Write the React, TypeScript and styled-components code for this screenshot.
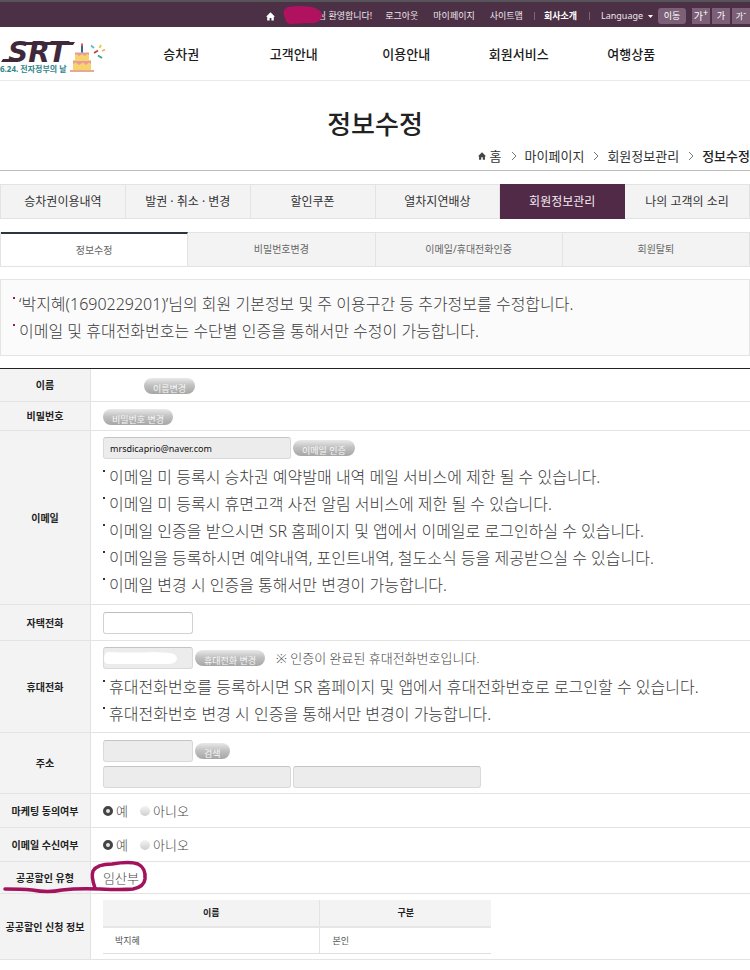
import React from "react";
import styled, { createGlobalStyle, css } from "styled-components";

const GlobalStyle = createGlobalStyle`
  *, *::before, *::after { box-sizing: border-box; }
  body {
    margin: 0;
    background: #fff;
    color: #444;
    font-family: "Noto Sans", "Noto Sans CJK KR", sans-serif;
    font-size: 13px;
    overflow-x: hidden;
  }
  h1, ul, ol, p { margin: 0; padding: 0; }
  ul, ol { list-style: none; }
  a { color: inherit; text-decoration: none; }
  button, input, select { font-family: inherit; margin: 0; }
  button { cursor: pointer; }
`;

/* ---------- top bar ---------- */

const TopBar = styled.div`
  display: flex;
  align-items: center;
  justify-content: flex-end;
  height: 27px;
  padding-top: 3px;
  border-top: 2px solid #58555a;
  background: #4b3046;
  color: #eee6ec;
  font-size: 9px;
  line-height: 16px;
  white-space: nowrap;
`;

const HomeLink = styled.a`
  display: flex;
  margin-right: 9px;
`;

const Welcome = styled.span`
  position: relative;
  padding-left: 34px;
  margin-right: 13px;
`;

const NameCover = styled.svg`
  position: absolute;
  left: -2px;
  top: -3px;
`;

const TopLink = styled.a<{ $strong?: boolean }>`
  margin-right: ${(p) => (p.$strong ? 12 : 15)}px;
  font-weight: ${(p) => (p.$strong ? 700 : 400)};
  color: ${(p) => (p.$strong ? "#fff" : "inherit")};

  &:nth-of-type(4) { margin-right: 11px; }
`;

const Bar = styled.span`
  width: 1px;
  height: 8px;
  margin-right: 9px;
  background: #7d6678;
`;

const LanguageField = styled.label`
  display: flex;
  align-items: center;
  gap: 4px;
  margin: 0 5px 0 2px;
`;

const LanguageSelect = styled.select`
  appearance: none;
  padding: 0;
  border: 0;
  background: transparent;
  color: inherit;
  font-size: 9px;
  line-height: 16px;
`;

const GoButton = styled.button`
  width: 28px;
  height: 16px;
  margin-right: 6px;
  padding: 0;
  border: 0;
  border-radius: 3px;
  background: #7b6077;
  color: #fff;
  font-size: 9px;
  line-height: 16px;
`;

const SizeButtons = styled.div`
  display: flex;
  gap: 2px;
`;

const SizeButton = styled.button<{ $size: number }>`
  display: flex;
  align-items: center;
  justify-content: center;
  width: 18px;
  height: 16px;
  padding: 0;
  border: 0;
  background: #7b6077;
  color: #fff;
  font-size: ${(p) => p.$size}px;
  line-height: 14px;

  sup { font-size: 9px; line-height: 9px; align-self: flex-start; }
`;

/* ---------- header ---------- */

const Header = styled.header`
  display: grid;
  grid-template-columns: 10fr 45fr 5fr;
  height: 54px;
  border-bottom: 1px solid #e9e9e9;
`;

const LogoLink = styled.a`
  display: block;
  padding-top: 13px;

  svg { display: block; overflow: visible; }
`;

const Nav = styled.nav`
  display: grid;
  grid-template-columns: repeat(5, 1fr);
  align-items: center;
  text-align: center;
  color: #1b1b1b;
  font-size: 13px;
  font-weight: 500;
`;

/* ---------- title ---------- */

const TitleArea = styled.section`
  border-bottom: 1px solid #bdbdbd;
  padding-top: 23px;
`;

const Title = styled.h1`
  text-align: center;
  color: #222;
  font-size: 26px;
  font-weight: 500;
  line-height: 40px;
`;

const Crumbs = styled.ol`
  display: flex;
  align-items: center;
  justify-content: flex-end;
  gap: 9px;
  height: 26px;
  padding-bottom: 2px;
  color: #333;
  font-size: 13px;
  line-height: 20px;
  white-space: nowrap;

  li { display: flex; align-items: center; gap: 8px; }
  li:first-child { gap: 4px; }
  li:last-child { font-weight: 500; color: #222; }
`;

/* ---------- tabs ---------- */

const MainTabs = styled.nav`
  display: grid;
  grid-template-columns: repeat(6, 1fr);
  margin-top: 13px;
  border-left: 1px solid #e3e3e3;
`;

const MainTab = styled.a<{ $active?: boolean }>`
  height: 35px;
  border: 1px solid #e3e3e3;
  border-left: 0;
  background: #f3f3f3;
  color: #333;
  font-size: 12px;
  line-height: 33px;
  text-align: center;
  white-space: nowrap;

  ${(p) => p.$active && css`
    border-color: #502a47;
    background: #502a47;
    color: #f4ecf2;
  `}
`;

const SubTabs = styled(MainTabs)`
  grid-template-columns: repeat(4, 1fr);
`;

const SubTab = styled.a<{ $active?: boolean }>`
  height: 35px;
  border: 1px solid #e3e3e3;
  border-left: 0;
  background: #f3f3f3;
  color: #666;
  font-size: 10px;
  line-height: 33px;
  text-align: center;

  ${(p) => p.$active && css`
    border-top: 2px solid #2b3440;
    background: #fff;
  `}
`;

/* ---------- notices ---------- */

const Notes = styled.ul<{ $dot?: string }>`
  color: #3c3c3c;
  font-size: 16px;
  font-weight: 300;
  line-height: 27px;

  li { display: flex; gap: 4px; }
  li::before {
    content: "";
    flex: none;
    width: 2px;
    height: 2px;
    margin-top: 6px;
    background: ${(p) => p.$dot || "#333"};
  }
`;

const Intro = styled.section`
  margin-top: 12px;
  padding: 11px 12px 10px;
  border: 1px solid #e4e4e4;
  background: #fbfbfb;
`;

/* ---------- form ---------- */

const FormTable = styled.table`
  width: 100%;
  margin-top: 12px;
  border-top: 1px solid #222;
  border-spacing: 0;
  table-layout: fixed;
`;

const LabelCol = styled.col`
  width: 91px;
`;

const Row = styled.tr<{ $h: number }>`
  height: ${(p) => p.$h}px;
`;

const Label = styled.th`
  position: relative;
  padding: 0;
  border-right: 1px solid #e3e3e3;
  border-bottom: 1px solid #e3e3e3;
  background: #f3f3f3;
  color: #222;
  font-size: 10px;
  font-weight: 700;
  line-height: 16px;
  text-align: center;
`;

const Field = styled.td`
  padding: 5px 0 4px 12px;
  border-bottom: 1px solid #e3e3e3;

  ${Notes} { margin-top: 5px; }
`;

const Line = styled.div`
  position: relative;
  display: flex;
  align-items: center;
  gap: 2px;

  & + & { margin-top: 4px; }
`;

const ErasedName = styled.span`
  width: 39px;
`;

const TextInput = styled.input<{ $wide?: boolean }>`
  width: ${(p) => (p.$wide ? 188 : 90)}px;
  height: 22px;
  padding: 0 6px;
  border: 1px solid #d2d2d2;
  border-top-color: #bdbdbd;
  border-radius: 3px;
  background: #fff;
  color: #111;
  font-size: 9px;

  &:read-only {
    border-color: #d9d9d9;
    border-top-color: #c4c4c4;
    background: #ececec;
  }
`;

const PillButton = styled.button`
  display: flex;
  align-items: flex-start;
  height: 16px;
  padding: 4px 9px 0;
  overflow: hidden;
  border: 0;
  border-radius: 8px;
  background: linear-gradient(#e9e9e9, #c2c2c2 45%, #a6a6a6);
  color: #f6f6f6;
  font-size: 9px;
  line-height: 14px;
  white-space: nowrap;
`;

const NumberCover = styled.svg`
  position: absolute;
  left: 1px;
  top: 4px;
`;

const Remark = styled.p`
  margin-left: 9px;
  font-size: 13px;
  font-weight: 300;
  line-height: 20px;
`;

const Choices = styled.div`
  display: flex;
  gap: 12px;
`;

const Choice = styled.label`
  display: flex;
  align-items: center;
  gap: 3px;
  font-size: 13px;
  font-weight: 300;
  line-height: 20px;
`;

const Radio = styled.input`
  appearance: none;
  width: 10px;
  height: 10px;
  margin: 0;
  border-radius: 50%;
  background: linear-gradient(#f4f4f4, #cfcfcf);

  &:checked {
    border: 3px solid #444;
    background: #e6e6e6;
  }
`;

const Value = styled.span`
  font-size: 13px;
  font-weight: 300;
  line-height: 20px;
`;

const Marking = styled.svg`
  position: absolute;
  left: 0;
  top: 0;
  z-index: 1;
  overflow: visible;
  pointer-events: none;
`;

const InnerTable = styled.table`
  width: 60%;
  border-spacing: 0;
  table-layout: fixed;
  font-size: 9px;
  line-height: 16px;

  th {
    height: 28px;
    padding: 0;
    border-bottom: 2px solid #e6e6e6;
    background: #f3f3f3;
    color: #222;
  }
  td {
    height: 26px;
    padding: 0 12px;
    border-bottom: 1px solid #e0e0e0;
    color: #555;
  }
  th:first-child, td:first-child {
    width: 56%;
    border-right: 1px solid #e3e3e3;
  }
`;

/* ---------- drawings ---------- */

const House = ({ fill, size }: { fill: string; size: number }) => (
  <svg width={size} height={size} viewBox="0 0 9 9" aria-hidden="true">
    <path d="M4.5 0.3 9 4.8H7.8V8.6H5.4V5.9H3.6V8.6H1.2V4.8H0Z" fill={fill} />
  </svg>
);

const Chevron = () => (
  <svg width="6" height="10" viewBox="0 0 6 10" aria-hidden="true">
    <path d="M1 1 5 5 1 9" fill="none" stroke="#777" />
  </svg>
);

const Logo = () => (
  <svg width="108" height="36" viewBox="0 0 108 36" role="img" aria-label="SRT">
    <text x="8" y="22" fill="#40283b" fontFamily="DejaVu Sans" fontSize="28" fontWeight="700" fontStyle="italic">SRT</text>
    <path d="M20 2H75L73 5H16Q17 2 20 2ZM3 19H18V22H1Z" fill="#40283b" />
    <text x="0" y="32" fill="#2f8587" fontSize="8" fontWeight="700">6.24. 전자정부의 날</text>
    <path d="M75 13H89V20H91V30H73V20H75Z" fill="#f6d36e" />
    <path d="M70 30H94V32H70Z" fill="#e5aa91" />
    <path d="M75 12.5H89V15L87 14 85 16 82 14 79 16 77 14 75 15ZM73 21H91V24L89 22.5 86 25 83 22.5 79 25 76 22.5 73 24Z" fill="#e99a9c" />
    <path d="M82 6V12.5" stroke="#31679c" strokeWidth="2" />
    <path d="M82 3.5V6" stroke="#e2574c" strokeWidth="2" />
    <g strokeWidth="1.8" fill="none">
      <path d="M91 5.5 94 8" stroke="#62b9c9" />
      <path d="M101 5 99.500 8" stroke="#ecc64f" />
      <path d="M94 13 98 10.500" stroke="#b84a38" />
      <path d="M102 11 105 9.500" stroke="#efb35d" />
      <path d="M98 15.500 102 18" stroke="#3aa087" />
    </g>
  </svg>
);

/* ---------- page ---------- */

const navItems = ["승차권", "고객안내", "이용안내", "회원서비스", "여행상품"];
const mainTabs = ["승차권이용내역", "발권 · 취소 · 변경", "할인쿠폰", "열차지연배상", "회원정보관리", "나의 고객의 소리"];
const subTabs = ["정보수정", "비밀번호변경", "이메일/휴대전화인증", "회원탈퇴"];
const emailNotes = [
  "이메일 미 등록시 승차권 예약발매 내역 메일 서비스에 제한 될 수 있습니다.",
  "이메일 미 등록시 휴면고객 사전 알림 서비스에 제한 될 수 있습니다.",
  "이메일 인증을 받으시면 SR 홈페이지 및 앱에서 이메일로 로그인하실 수 있습니다.",
  "이메일을 등록하시면 예약내역, 포인트내역, 철도소식 등을 제공받으실 수 있습니다.",
  "이메일 변경 시 인증을 통해서만 변경이 가능합니다.",
];
const phoneNotes = [
  "휴대전화번호를 등록하시면 SR 홈페이지 및 앱에서 휴대전화번호로 로그인할 수 있습니다.",
  "휴대전화번호 변경 시 인증을 통해서만 변경이 가능합니다.",
];

const YesNo = ({ name }: { name: string }) => (
  <Choices>
    <Choice><Radio type="radio" name={name} defaultChecked />예</Choice>
    <Choice><Radio type="radio" name={name} />아니오</Choice>
  </Choices>
);

export default function App() {
  return (
    <>
      <GlobalStyle />
      <TopBar>
        <HomeLink href="#" aria-label="홈"><House fill="#fff" size={9} /></HomeLink>
        <Welcome>
          님 환영합니다!
          <NameCover width="42" height="21" viewBox="0 0 42 21" aria-hidden="true">
            <path d="M6 2Q18 0 30 2Q41 5 40 12Q37 19 28 18L9 19Q4 19 3 13Q-1 5 6 2Z" fill="#b0125f" />
          </NameCover>
        </Welcome>
        <TopLink href="#">로그아웃</TopLink>
        <TopLink href="#">마이페이지</TopLink>
        <TopLink href="#">사이트맵</TopLink>
        <Bar />
        <TopLink href="#" $strong>회사소개</TopLink>
        <Bar />
        <LanguageField>
          <LanguageSelect aria-label="Language"><option>Language</option></LanguageSelect>
          <svg width="5" height="3" viewBox="0 0 5 3" aria-hidden="true"><path d="M0 0H5L2.500 3Z" fill="#fff" /></svg>
        </LanguageField>
        <GoButton type="button">이동</GoButton>
        <SizeButtons>
          <SizeButton type="button" $size={10}>가<sup>+</sup></SizeButton>
          <SizeButton type="button" $size={9}>가</SizeButton>
          <SizeButton type="button" $size={8}>가<sup>-</sup></SizeButton>
        </SizeButtons>
      </TopBar>

      <Header>
        <LogoLink href="#"><Logo /></LogoLink>
        <Nav>{navItems.map((t) => <a href="#" key={t}>{t}</a>)}</Nav>
      </Header>

      <main>
        <TitleArea>
          <Title>정보수정</Title>
          <Crumbs>
            <li><House fill="#444" size={8} /><a href="#">홈</a></li>
            <li><Chevron /><a href="#">마이페이지</a></li>
            <li><Chevron /><a href="#">회원정보관리</a></li>
            <li><Chevron />정보수정</li>
          </Crumbs>
        </TitleArea>

        <MainTabs>
          {mainTabs.map((t) => <MainTab href="#" key={t} $active={t === "회원정보관리"}>{t}</MainTab>)}
        </MainTabs>
        <SubTabs>
          {subTabs.map((t) => <SubTab href="#" key={t} $active={t === "정보수정"}>{t}</SubTab>)}
        </SubTabs>

        <Intro>
          <Notes $dot="#8a1f63">
            <li>‘박지혜(1690229201)’님의 회원 기본정보 및 주 이용구간 등 추가정보를 수정합니다.</li>
            <li>이메일 및 휴대전화번호는 수단별 인증을 통해서만 수정이 가능합니다.</li>
          </Notes>
        </Intro>

        <FormTable>
          <colgroup><LabelCol /><col /></colgroup>
          <tbody>
            <Row $h={33}>
              <Label scope="row">이름</Label>
              <Field><Line><ErasedName /><PillButton type="button">이름변경</PillButton></Line></Field>
            </Row>
            <Row $h={29}>
              <Label scope="row">비밀번호</Label>
              <Field><PillButton type="button">비밀번호 변경</PillButton></Field>
            </Row>
            <Row $h={174}>
              <Label scope="row"><label htmlFor="email">이메일</label></Label>
              <Field>
                <Line>
                  <TextInput id="email" $wide readOnly defaultValue="mrsdicaprio@naver.com" />
                  <PillButton type="button">이메일 인증</PillButton>
                </Line>
                <Notes>{emailNotes.map((t) => <li key={t}>{t}</li>)}</Notes>
              </Field>
            </Row>
            <Row $h={36}>
              <Label scope="row"><label htmlFor="home">자택전화</label></Label>
              <Field><Line><TextInput id="home" type="tel" /></Line></Field>
            </Row>
            <Row $h={92}>
              <Label scope="row"><label htmlFor="mobile">휴대전화</label></Label>
              <Field>
                <Line>
                  <TextInput id="mobile" type="tel" readOnly />
                  <NumberCover width="74" height="15" viewBox="0 0 74 15" aria-hidden="true">
                    <path d="M4 1Q30 2 50 1L66 2Q73 3 73 8Q72 13 64 13H20L5 13Q0 13 0 8Q0 2 4 1Z" fill="#fff" />
                  </NumberCover>
                  <PillButton type="button">휴대전화 변경</PillButton>
                  <Remark>※ 인증이 완료된 휴대전화번호입니다.</Remark>
                </Line>
                <Notes>{phoneNotes.map((t) => <li key={t}>{t}</li>)}</Notes>
              </Field>
            </Row>
            <Row $h={61}>
              <Label scope="row"><label htmlFor="zip">주소</label></Label>
              <Field>
                <Line>
                  <TextInput id="zip" readOnly />
                  <PillButton type="button">검색</PillButton>
                </Line>
                <Line>
                  <TextInput $wide readOnly aria-label="기본 주소" />
                  <TextInput $wide readOnly aria-label="상세 주소" />
                </Line>
              </Field>
            </Row>
            <Row $h={34}>
              <Label scope="row">마케팅 동의여부</Label>
              <Field><YesNo name="marketing" /></Field>
            </Row>
            <Row $h={34}>
              <Label scope="row">이메일 수신여부</Label>
              <Field><YesNo name="mailing" /></Field>
            </Row>
            <Row $h={32}>
              <Label scope="row">
                공공할인 유형
                <Marking width="150" height="32" viewBox="0 0 150 32" aria-hidden="true">
                  <path
                    d="M5 27Q22 27 32 28Q48 31 62 28Q78 26 100 27Q122 28 133 27Q144 25 145 17Q146 6 138 2Q130 -1 112 2Q97 2 93 9Q91 15 95 26"
                    fill="none"
                    stroke="#a3125c"
                    strokeWidth="3.5"
                    strokeLinecap="round"
                    strokeLinejoin="round"
                  />
                </Marking>
              </Label>
              <Field><Value>임산부</Value></Field>
            </Row>
            <Row $h={66}>
              <Label scope="row">공공할인 신청 정보</Label>
              <Field>
                <InnerTable>
                  <thead><tr><th scope="col">이름</th><th scope="col">구분</th></tr></thead>
                  <tbody><tr><td>박지혜</td><td>본인</td></tr></tbody>
                </InnerTable>
              </Field>
            </Row>
          </tbody>
        </FormTable>
      </main>
    </>
  );
}
